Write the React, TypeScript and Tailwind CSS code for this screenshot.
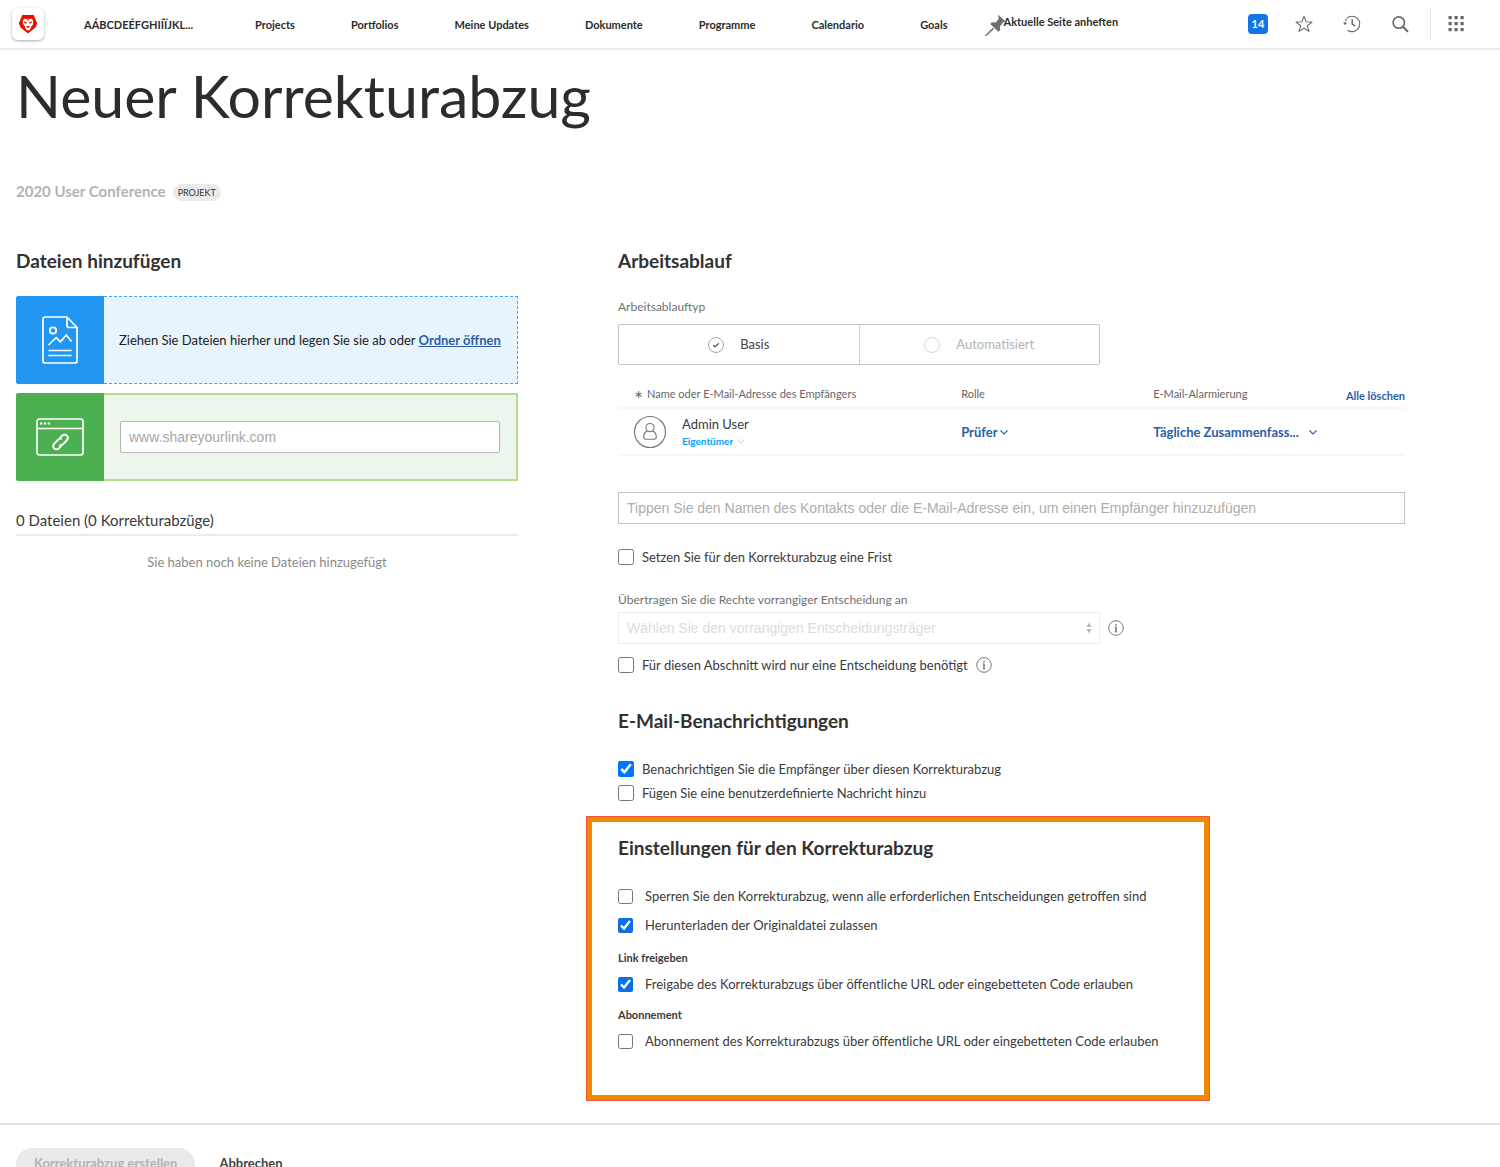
import type { ReactNode } from "react";

const navItems = [
  "Projects",
  "Portfolios",
  "Meine Updates",
  "Dokumente",
  "Programme",
  "Calendario",
  "Goals",
];

function Logo() {
  return (
    <svg viewBox="0 0 20 20" className="size-5" aria-hidden="true">
      <path d="M4.2 1h11.6l1.8 4.4L19.2 9l-1.7 4.6L10 19.6l-7.500-6L.8 9l1.600-3.600z" fill="#eb1000" />
      <path
        d="M4.600 7.200 6.400 4.500 8.300 5.200 10 4.600l1.700.6 1.900-.7 1.800 2.700-.6 1.400.4 1.600-2 2.600-1.200 3L10 16.400l-2-1.200-1.200-3-2-2.600.4-1.600z"
        fill="#fff"
      />
      <path d="m6 7.200 3 1.300-.7 1.200-1.900-.8zM14 7.200l-3 1.300.7 1.200 1.900-.8zM8 12h4L10 14.200z" fill="#eb1000" />
      <path d="m9.200 4.800.8 3.200.8-3.200z" fill="#eb1000" />
    </svg>
  );
}

function PinIcon() {
  return (
    <svg viewBox="0 0 24 24" className="size-6 shrink-0" aria-hidden="true">
      <path d="M14 2.500 21.500 9.500l-2.400.8-3.200 4.200.2 3.700-1.700 1.500L6.200 12l1.600-1.700 3.900.1 3.100-3.600z" fill="#6e6e6e" />
      <path d="m8.800 16 1 .9L2 24l-.8.100.2-.8z" fill="#6e6e6e" stroke="#6e6e6e" strokeWidth="0.500" />
    </svg>
  );
}

function StarIcon() {
  return (
    <svg viewBox="0 0 20 20" className="size-5" fill="none" stroke="#6e6e6e" strokeWidth="1.100" strokeLinejoin="round" aria-hidden="true">
      <path d="m10 2.200 2 5.500 6 .3-4.700 3.700 1.600 5.700L10 14.200l-4.900 3.200 1.600-5.700L2 8l6-.3z" />
    </svg>
  );
}

function HistoryIcon() {
  return (
    <svg viewBox="0 0 20 20" className="size-5" fill="none" stroke="#6e6e6e" strokeWidth="1.100" aria-hidden="true">
      <path d="M4.900 4.200a7.700 7.700 0 1 1 .6 12" />
      <path d="M3 10.500c0-3 .7-4.700 2.300-6.400" strokeDasharray="2.500 1" />
      <path d="m1 8.600 2 2.400 2.200-2.300z" fill="#6e6e6e" stroke="none" />
      <path d="M10.200 5.200v5l3 2" strokeWidth="1.500" />
    </svg>
  );
}

function SearchIcon() {
  return (
    <svg viewBox="0 0 20 20" className="size-5" fill="none" stroke="#666" aria-hidden="true">
      <circle cx="8.800" cy="8.600" r="5.700" strokeWidth="1.600" />
      <path d="m13 12.800 4.400 4.400" strokeWidth="2" strokeLinecap="round" />
    </svg>
  );
}

function AppsIcon() {
  return (
    <svg viewBox="0 0 20 20" className="size-5" fill="#666" aria-hidden="true">
      {[2, 8, 14].map((y) =>
        [2, 8, 14].map((x) => <rect key={`${x}-${y}`} x={x + 0.5} y={y} width="3.200" height="3.200" rx="0.600" />),
      )}
    </svg>
  );
}

function FileIcon() {
  return (
    <svg viewBox="0 0 36 48" className="h-12 w-9" fill="none" stroke="#fff" strokeWidth="1.700" strokeLinejoin="round" aria-hidden="true">
      <path d="M25 1H3a2 2 0 0 0-2 2v42a2 2 0 0 0 2 2h30a2 2 0 0 0 2-2V11.500z" />
      <path d="M25 1v8.500a2 2 0 0 0 2 2h8" />
      <circle cx="11" cy="14.500" r="3.200" />
      <path d="m6.500 29 7.800-7.500 4 4.500 6-7 5.200 6.500" />
      <path d="M6.500 34.500h23M6.500 39.500h23" />
    </svg>
  );
}

function LinkIcon() {
  return (
    <svg viewBox="0 0 48 38" className="h-[38px] w-12" fill="none" stroke="#fff" strokeWidth="1.700" aria-hidden="true">
      <rect x="1" y="1" width="46" height="36" rx="2.500" />
      <path d="M1 10.500h46" />
      <path d="M4 5.500h10" strokeWidth="2" strokeDasharray="2.400 1.400" />
      <g transform="rotate(-45 24.500 24)" strokeWidth="2">
        <path d="M23 27.300h-4.200a3.300 3.300 0 0 1 0-6.600h5.700a3.300 3.300 0 0 1 3 2" />
        <path d="M26 20.700h4.200a3.300 3.300 0 0 1 0 6.600h-5.700a3.300 3.300 0 0 1-3-2" />
      </g>
    </svg>
  );
}

function AvatarIcon() {
  return (
    <svg viewBox="0 0 34 34" className="size-[34px] shrink-0" fill="none" stroke="#777" aria-hidden="true">
      <circle cx="17" cy="17" r="15.500" strokeWidth="1.200" />
      <circle cx="17" cy="12.600" r="4.100" strokeWidth="1.100" />
      <path d="M14.200 15.800c-2.400 1.600-3.500 3.700-3.500 6 0 1.500.8 2.400 2.200 2.400h8.200c1.400 0 2.200-.9 2.200-2.400 0-2.300-1.100-4.400-3.500-6" strokeWidth="1.100" />
    </svg>
  );
}

function InfoIcon() {
  return (
    <svg viewBox="1 1 16 16" className="size-4 shrink-0" fill="none" stroke="#7a7a7a" role="img" aria-label="Information">
      <circle cx="9" cy="9" r="7.300" strokeWidth="1" />
      <path d="M9 7.800v5.200" strokeWidth="1.600" />
      <path d="M9 4.900v1.500" strokeWidth="1.600" />
      <path d="M7.500 13h3M7.500 7.800H9" strokeWidth="0.700" />
    </svg>
  );
}

function Chevron({ className }: { className: string }) {
  return (
    <svg viewBox="0 0 8 8" className={className} fill="none" stroke="currentColor" strokeWidth="1.100" aria-hidden="true">
      <path d="m.5 2.500 3.500 3.500 3.500-3.500" />
    </svg>
  );
}

function SectionTitle({ children }: { children: ReactNode }) {
  return <h2 className="text-[19px] leading-6 font-bold text-[#323232]">{children}</h2>;
}

function CheckRow({ label, checked, wide, children }: { label: string; checked?: boolean; wide?: boolean; children?: ReactNode }) {
  return (
    <div className="flex h-6 items-center">
      <label className={wide ? "flex items-center gap-3" : "flex items-center gap-2"}>
        <input
          type="checkbox"
          defaultChecked={checked}
          className={wide ? "size-[15px] shrink-0 accent-[#0d6fe8]" : "size-4 shrink-0 accent-[#0075ff]"}
        />
        <span>{label}</span>
      </label>
      {children}
    </div>
  );
}

function TypeOption({ label, checked }: { label: string; checked?: boolean }) {
  return (
    <label
      className={
        checked
          ? "flex flex-1 items-center justify-center gap-4 border-r border-[#cfcfcf] text-[#444]"
          : "flex flex-1 items-center justify-center gap-4 text-[#b3b3b3]"
      }
    >
      <span className="grid place-items-center">
        <input
          type="radio"
          name="workflow-type"
          defaultChecked={checked}
          className="col-start-1 row-start-1 size-4 appearance-none rounded-full border border-[#d4d4d4] checked:border-[#a6a6a6]"
        />
        {checked && (
          <svg viewBox="0 0 8 8" className="col-start-1 row-start-1 size-2" fill="none" stroke="#444" strokeWidth="1.200" aria-hidden="true">
            <path d="m1.200 4.200 1.800 1.600 3.800-3.400" />
          </svg>
        )}
      </span>
      <span className="pb-0.5">{label}</span>
    </label>
  );
}

export default function App() {
  return (
    <div className="flex h-screen flex-col overflow-hidden bg-white font-['Lato',sans-serif] text-[13px] leading-5 text-[#3a3a3a]">
      <header className="flex h-[50px] shrink-0 items-center border-b-2 border-[#ebebeb] pr-[34px] pl-3 text-[11px] text-[#2c2c2c]">
        <a href="#home" aria-label="Home" className="flex size-8 items-center justify-center rounded-md bg-white shadow-[0_1px_3px_rgba(0,0,0,0.35)]">
          <Logo />
        </a>
        <nav className="ml-10 flex items-center pt-0.5 font-bold">
          <a href="#pinned" className="mr-[62px]">AÁBCDEÉFGHIÍÏJKL...</a>
          <div className="flex gap-14">
            {navItems.map((item) => (
              <a key={item} href="#nav">{item}</a>
            ))}
          </div>
        </nav>
        <button type="button" className="ml-9 flex items-center font-bold">
          <PinIcon />
          <span className="-ml-1 pb-1">Aktuelle Seite anheften</span>
        </button>
        <div className="ml-auto flex items-center">
          <button type="button" className="size-5 rounded-sm bg-[#1473e6] text-[11px] leading-5 font-bold text-white">14</button>
          <button type="button" aria-label="Favoriten" className="ml-[26px]"><StarIcon /></button>
          <button type="button" aria-label="Verlauf" className="ml-7"><HistoryIcon /></button>
          <button type="button" aria-label="Suchen" className="ml-7"><SearchIcon /></button>
          <div className="ml-5 h-8 w-px bg-[#e6e6e6]" />
          <button type="button" aria-label="Apps" className="ml-[15px]"><AppsIcon /></button>
        </div>
      </header>

      <main className="min-h-0 flex-1 overflow-hidden pr-[95px] pl-4">
        <h1 className="pt-2.5 text-[59px] leading-[72px] text-[#2c2c2c]">Neuer Korrekturabzug</h1>
        <div className="mt-[50px] flex h-[18px] items-center gap-[7px]">
          <span className="text-[15px] font-bold text-[#b3b3b3]">2020 User Conference</span>
          <span className="mt-0.5 rounded-full bg-[#ebebeb] px-[5px] text-[9px] leading-[17px] text-[#333]">PROJEKT</span>
        </div>

        <div className="mt-[49px] grid grid-cols-[minmax(0,502fr)_minmax(0,787fr)] gap-x-[100px]">
          <section>
            <SectionTitle>Dateien hinzufügen</SectionTitle>
            <div className="mt-[23px] flex h-[88px]">
              <div className="flex w-[88px] shrink-0 items-center justify-center rounded-l-xs bg-[#2196f3]"><FileIcon /></div>
              <div className="flex flex-1 items-center border border-l-0 border-dashed border-[#42a5f5] bg-[#e7f3fd] pl-[15px]">
                <p className="text-[#222]">
                  Ziehen Sie Dateien hierher und legen Sie sie ab oder{" "}
                  <a href="#browse" className="font-bold text-[#2a5fa8] underline">Ordner öffnen</a>
                </p>
              </div>
            </div>
            <div className="mt-[9px] flex h-[88px]">
              <div className="flex w-[88px] shrink-0 items-center justify-center rounded-l-xs bg-[#4caf50]"><LinkIcon /></div>
              <div className="flex flex-1 items-center border-2 border-l-0 border-[#b5dc92] bg-[#edf6ed] px-4">
                <input
                  type="text"
                  aria-label="Link"
                  placeholder="www.shareyourlink.com"
                  className="h-8 w-full rounded-xs border border-[#b5b5b5] bg-white px-2 font-['Liberation_Sans',sans-serif] text-[14px] placeholder:text-[#a6a6a6]"
                />
              </div>
            </div>
            <h3 className="mt-7 border-b-2 border-[#ececec] pb-[3px] text-[15px] leading-[22px]">0 Dateien (0 Korrekturabzüge)</h3>
            <p className="mt-4 text-center text-[#8a8a8a]">Sie haben noch keine Dateien hinzugefügt</p>
          </section>

          <section>
            <SectionTitle>Arbeitsablauf</SectionTitle>
            <fieldset>
              <legend className="pt-6 pb-[7px] text-[12px] text-[#707070]">Arbeitsablauftyp</legend>
              <div className="flex h-[41px] max-w-[482px] rounded-xs border border-[#c4c4c4]">
                <TypeOption label="Basis" checked />
                <TypeOption label="Automatisiert" />
              </div>
            </fieldset>

            <table className="mt-4 w-full table-fixed border-collapse text-left">
              <colgroup>
                <col className="w-[43.6%]" />
                <col className="w-[24.4%]" />
                <col className="w-[21.6%]" />
                <col />
              </colgroup>
              <thead>
                <tr className="h-[27px] border-b-2 border-[#f7f7f7] text-[11px] text-[#666]">
                  <th className="pl-4 font-normal">
                    <span className="mr-1 inline-block">∗</span>Name oder E-Mail-Adresse des Empfängers
                  </th>
                  <th className="font-normal">Rolle</th>
                  <th className="font-normal">E-Mail-Alarmierung</th>
                  <th className="pt-1 text-right"><button type="button" className="font-bold text-[#2a5fa8]">Alle löschen</button></th>
                </tr>
              </thead>
              <tbody>
                <tr className="h-[47px] border-b-2 border-[#f7f7f7]">
                  <td className="pl-[15px]">
                    <div className="flex items-center gap-[15px]">
                      <AvatarIcon />
                      <div>
                        <div className="leading-[18px]">Admin User</div>
                        <div className="flex items-center gap-1">
                          <select aria-label="Eigentümer" className="field-sizing-content appearance-none text-[10px] leading-4 font-bold text-[#00a2ff]">
                            <option>Eigentümer</option>
                          </select>
                          <Chevron className="size-2 text-[#ddd]" />
                        </div>
                      </div>
                    </div>
                  </td>
                  <td>
                    <div className="flex items-center gap-0.5 text-[#2a5fa8]">
                      <select aria-label="Rolle" className="field-sizing-content appearance-none font-bold">
                        <option>Prüfer</option>
                      </select>
                      <Chevron className="size-2" />
                    </div>
                  </td>
                  <td>
                    <div className="flex items-center gap-2.5 text-[#2a5fa8]">
                      <select aria-label="E-Mail-Alarmierung" className="field-sizing-content appearance-none font-bold">
                        <option>Tägliche Zusammenfass...</option>
                      </select>
                      <Chevron className="size-2" />
                    </div>
                  </td>
                  <td />
                </tr>
              </tbody>
            </table>

            <input
              type="text"
              aria-label="Empfänger"
              placeholder="Tippen Sie den Namen des Kontakts oder die E-Mail-Adresse ein, um einen Empfänger hinzuzufügen"
              className="mt-9 block h-8 w-full border border-[#c4c4c4] px-2 font-['Liberation_Sans',sans-serif] text-[14px] placeholder:text-[#adadad]"
            />
            <div className="mt-[21px]">
              <CheckRow label="Setzen Sie für den Korrekturabzug eine Frist" />
            </div>

            <label htmlFor="decision-maker" className="mt-[21px] block text-[12px] text-[#707070]">
              Übertragen Sie die Rechte vorrangiger Entscheidung an
            </label>
            <div className="mt-0.5 flex items-center gap-2">
              <div className="relative w-full max-w-[482px]">
                <select
                  id="decision-maker"
                  disabled
                  className="block h-8 w-full appearance-none border border-[#ededed] px-2 font-['Liberation_Sans',sans-serif] text-[14px] text-[#dcdcdc] opacity-100"
                >
                  <option>Wählen Sie den vorrangigen Entscheidungsträger</option>
                </select>
                <svg viewBox="0 0 6 12" className="absolute top-2.5 right-2 h-3 w-1.5" fill="#b8b8b8" aria-hidden="true">
                  <path d="M3 .5 5.500 5h-5zM.5 7h5L3 11.500z" />
                </svg>
              </div>
              <InfoIcon />
            </div>
            <div className="mt-[9px]">
              <CheckRow label="Für diesen Abschnitt wird nur eine Entscheidung benötigt">
                <span className="ml-2"><InfoIcon /></span>
              </CheckRow>
            </div>

            <div className="mt-8">
              <SectionTitle>E-Mail-Benachrichtigungen</SectionTitle>
              <div className="mt-6">
                <CheckRow label="Benachrichtigen Sie die Empfänger über diesen Korrekturabzug" checked />
                <CheckRow label="Fügen Sie eine benutzerdefinierte Nachricht hinzu" />
              </div>
            </div>

            <div className="mt-[11px] -ml-8 max-w-[624px] border border-[#f0543c]">
              <div className="border-[5px] border-[#f08a00] px-[26px] pt-3.5 pb-[42px]">
                <SectionTitle>Einstellungen für den Korrekturabzug</SectionTitle>
                <div className="mt-6 flex flex-col gap-[5px]">
                  <CheckRow wide label="Sperren Sie den Korrekturabzug, wenn alle erforderlichen Entscheidungen getroffen sind" />
                  <CheckRow wide label="Herunterladen der Originaldatei zulassen" checked />
                </div>
                <h3 className="mt-[11px] text-[11px] leading-5 font-bold">Link freigeben</h3>
                <div className="mt-1">
                  <CheckRow wide label="Freigabe des Korrekturabzugs über öffentliche URL oder eingebetteten Code erlauben" checked />
                </div>
                <h3 className="mt-[9px] text-[11px] leading-5 font-bold">Abonnement</h3>
                <div className="mt-1">
                  <CheckRow wide label="Abonnement des Korrekturabzugs über öffentliche URL oder eingebetteten Code erlauben" />
                </div>
              </div>
            </div>
          </section>
        </div>
      </main>

      <footer className="flex h-11 shrink-0 items-start gap-6 overflow-hidden border-t-2 border-[#e4e4e4] px-4 pt-[23px] font-bold">
        <button type="button" disabled className="h-8 shrink-0 rounded-full bg-[#eaeaea] px-[18px] pb-0.5 text-[#b3b3b3]">Korrekturabzug erstellen</button>
        <button type="button" className="h-8 shrink-0 pb-0.5 text-[#444]">Abbrechen</button>
      </footer>
    </div>
  );
}
